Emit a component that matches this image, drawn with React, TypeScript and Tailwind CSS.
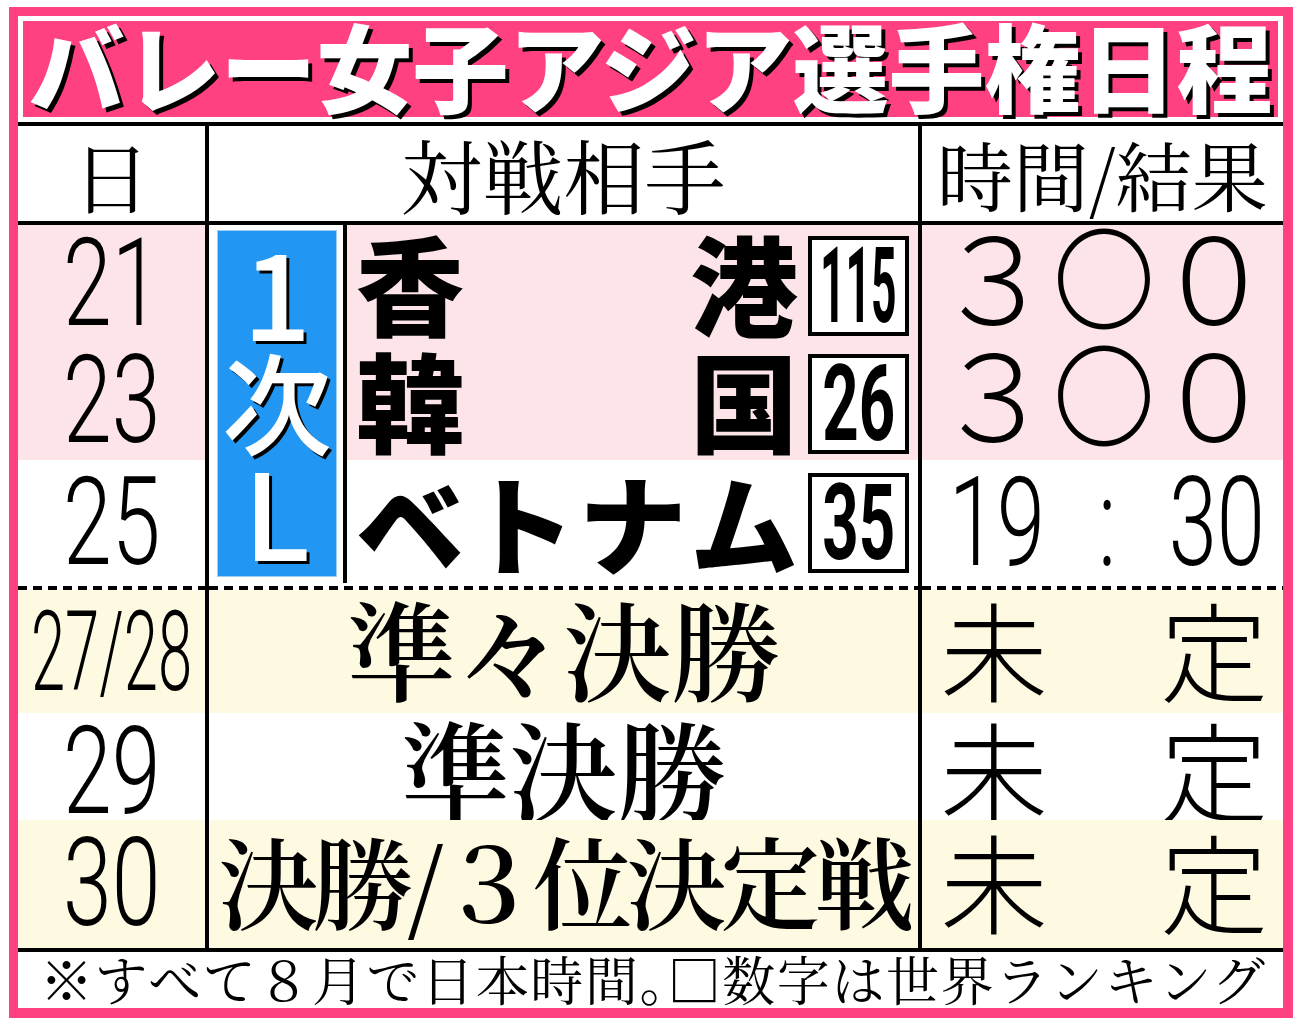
import React from "react";

const gothic = "font-['Noto_Sans_CJK_JP',sans-serif]";
const mincho = "font-['Noto_Serif_CJK_JP','Noto_Sans_CJK_JP',serif]";
const roboto = "font-['Roboto','Liberation_Sans',sans-serif]";

function Day({ text, bg, narrow }: { text: string; bg: string; narrow?: boolean }) {
  return (
    <div className={`flex items-center justify-center overflow-hidden ${bg}`}>
      {narrow ? (
        <span className={`${roboto} inline-block font-light text-[112px] leading-none scale-x-[0.55] whitespace-nowrap`}>{text}</span>
      ) : (
        <span className={`${roboto} inline-block font-light text-[122px] leading-none scale-x-[0.72] whitespace-nowrap`}>{text}</span>
      )}
    </div>
  );
}

function RankBox({ n, wide }: { n: string; wide?: boolean }) {
  return (
    <div className="w-[101px] h-[100px] shrink-0 border-[4px] border-black bg-white flex items-center justify-center overflow-hidden">
      <span
        className={`${roboto} inline-block font-bold text-[106px] leading-none whitespace-nowrap ${wide ? "scale-x-[0.42]" : "scale-x-[0.6]"}`}
      >
        {n}
      </span>
    </div>
  );
}

function Three({ a, b, c, kind }: { a: string; b: string; c: string; kind: "score" | "time" | "tbd" }) {
  const cls =
    kind === "time"
      ? `${roboto} inline-block font-light text-[124px] leading-none scale-x-[0.7] whitespace-nowrap`
      : kind === "score"
      ? `${gothic} inline-block font-light text-[120px] leading-none whitespace-nowrap`
      : `${gothic} inline-block font-light text-[108px] leading-none whitespace-nowrap`;
  const mid =
    kind === "score"
      ? `${gothic} inline-block font-light text-[112px] leading-none whitespace-nowrap scale-x-[0.92]`
      : cls;
  const pad = kind === "time" ? "pl-[20px]" : kind === "score" ? "pl-[17px] pb-[22px]" : "pl-[17px] pb-[10px]";
  return (
    <div className={`h-full flex items-center ${pad}`}>
      <div className="w-[110px] flex justify-center">
        <span className={cls}>{a}</span>
      </div>
      <div className="w-[110px] flex justify-center">
        <span className={mid}>{b}</span>
      </div>
      <div className="w-[110px] flex justify-center">
        <span className={cls}>{c}</span>
      </div>
    </div>
  );
}

export default function App() {
  return (
    <div className="w-[1300px] h-[1025px] bg-white pt-[7px] pl-[9px]">
      <div className="w-[1284px] h-[1011px] border-t-[9px] border-l-[9px] border-r-[10px] border-b-[10px] border-[#ff4081] bg-white flex flex-col text-black">
        {/* title */}
        <div className="p-[5px]">
          <div className="h-[96px] bg-[#ff4081] flex items-center justify-center pb-[10px]">
            <span className={`${gothic} font-black text-[96px] leading-none text-white whitespace-nowrap [text-shadow:4px_4px_0_#000]`}>
              バレー女子アジア選手権日程
            </span>
          </div>
        </div>
        <div className="h-[4px] bg-black" />

        {/* header */}
        <div className="h-[95px] grid grid-cols-[187px_4px_709px_4px_361px]">
          <div className={`${mincho} flex items-center justify-center text-[78px] leading-none`}>日</div>
          <div className="bg-black" />
          <div className={`${mincho} flex items-center justify-center text-[81px] leading-none`}>対戦相手</div>
          <div className="bg-black" />
          <div className={`${mincho} flex items-center justify-center text-[76px] leading-none whitespace-nowrap`}>時間/結果</div>
        </div>
        <div className="h-[4px] bg-black" />

        {/* group stage block */}
        <div className="h-[361px] grid grid-cols-[187px_4px_134px_4px_571px_4px_361px] grid-rows-[117px_118px_126px]">
          <Day text="21" bg="bg-[#fde4e8] col-start-1 row-start-1" />
          <Day text="23" bg="bg-[#fde4e8] col-start-1 row-start-2" />
          <Day text="25" bg="bg-white col-start-1 row-start-3" />

          <div className="col-start-2 row-start-1 row-span-3 bg-black" />

          <div className="col-start-3 row-start-1 row-span-3 bg-white pl-[8px] pt-[5px]">
            <div
              className={`w-[120px] h-[347px] bg-[#2196f3] border border-[#9ccff7] flex flex-col items-center justify-center pb-[10px] text-white ${gothic} font-medium leading-[110px] [text-shadow:3px_3px_0_#000]`}
            >
              <span className="text-[120px]">1</span>
              <span className="text-[110px]">次</span>
              <span className="text-[120px]">L</span>
            </div>
          </div>

          <div className="col-start-4 row-start-1 row-span-3 bg-black mb-[3px]" />

          <div className="col-start-5 row-start-1 bg-[#fde4e8] flex items-center pl-[9px] pr-[9px] gap-[10px]">
            <div className={`${gothic} flex-1 flex justify-between font-black text-[108px] leading-none pb-[6px]`}>
              <span>香</span>
              <span>港</span>
            </div>
            <div className="mt-[5px]">
              <RankBox n="115" wide />
            </div>
          </div>
          <div className="col-start-5 row-start-2 bg-[#fde4e8] flex items-center pl-[9px] pr-[9px] gap-[10px]">
            <div className={`${gothic} flex-1 flex justify-between font-black text-[108px] leading-none pb-[6px]`}>
              <span>韓</span>
              <span>国</span>
            </div>
            <div className="mt-[6px]">
              <RankBox n="26" />
            </div>
          </div>
          <div className="col-start-5 row-start-3 bg-white flex items-center pl-[9px] pr-[9px] gap-[10px]">
            <div className={`${gothic} flex-1 flex justify-between font-black text-[108px] leading-none pb-[6px]`}>
              <span>ベ</span>
              <span>ト</span>
              <span>ナ</span>
              <span>ム</span>
            </div>
            <RankBox n="35" />
          </div>

          <div className="col-start-6 row-start-1 row-span-3 bg-black" />

          <div className="col-start-7 row-start-1 bg-[#fde4e8]">
            <Three a="３" b="〇" c="０" kind="score" />
          </div>
          <div className="col-start-7 row-start-2 bg-[#fde4e8]">
            <Three a="３" b="〇" c="０" kind="score" />
          </div>
          <div className="col-start-7 row-start-3 bg-white">
            <Three a="19" b=":" c="30" kind="time" />
          </div>
        </div>

        {/* dashed separator */}
        <div className="h-[4px] grid grid-cols-[187px_4px_709px_4px_361px]">
          <div className="bg-white bg-[repeating-linear-gradient(90deg,#000_0px,#000_9px,transparent_9px,transparent_15px)]" />
          <div className="bg-black" />
          <div className="bg-white bg-[repeating-linear-gradient(90deg,#000_0px,#000_9px,transparent_9px,transparent_15px)]" />
          <div className="bg-black" />
          <div className="bg-white bg-[repeating-linear-gradient(90deg,#000_0px,#000_9px,transparent_9px,transparent_15px)]" />
        </div>

        {/* knockout rows */}
        <div className="h-[123px] grid grid-cols-[187px_4px_709px_4px_361px] bg-[#fefae2]">
          <Day text="27/28" bg="" narrow />
          <div className="bg-black" />
          <div className={`${mincho} flex items-center justify-center pb-[10px] font-semibold text-[108px] leading-none whitespace-nowrap`}>準々決勝</div>
          <div className="bg-black" />
          <Three a="未" b="" c="定" kind="tbd" />
        </div>
        <div className="h-[107px] grid grid-cols-[187px_4px_709px_4px_361px] bg-white">
          <Day text="29" bg="" />
          <div className="bg-black" />
          <div className={`${mincho} flex items-center justify-center pb-[10px] font-semibold text-[108px] leading-none whitespace-nowrap`}>準決勝</div>
          <div className="bg-black" />
          <Three a="未" b="" c="定" kind="tbd" />
        </div>
        <div className="h-[128px] grid grid-cols-[187px_4px_709px_4px_361px] bg-[#fefae2]">
          <Day text="30" bg="" />
          <div className="bg-black" />
          <div className={`${mincho} flex items-center justify-center pb-[10px] font-semibold text-[100px] leading-none whitespace-nowrap tracking-[-6px]`}>
            決勝/３位決定戦
          </div>
          <div className="bg-black" />
          <Three a="未" b="" c="定" kind="tbd" />
        </div>
        <div className="h-[4px] bg-black" />

        {/* footer */}
        <div className={`h-[56px] flex items-center pl-[22px] pb-[4px] ${mincho} text-[53px] leading-none whitespace-nowrap tracking-[1.6px]`}>
          ※すべて８月で日本時間｡□数字は世界ランキング
        </div>
      </div>
    </div>
  );
}
